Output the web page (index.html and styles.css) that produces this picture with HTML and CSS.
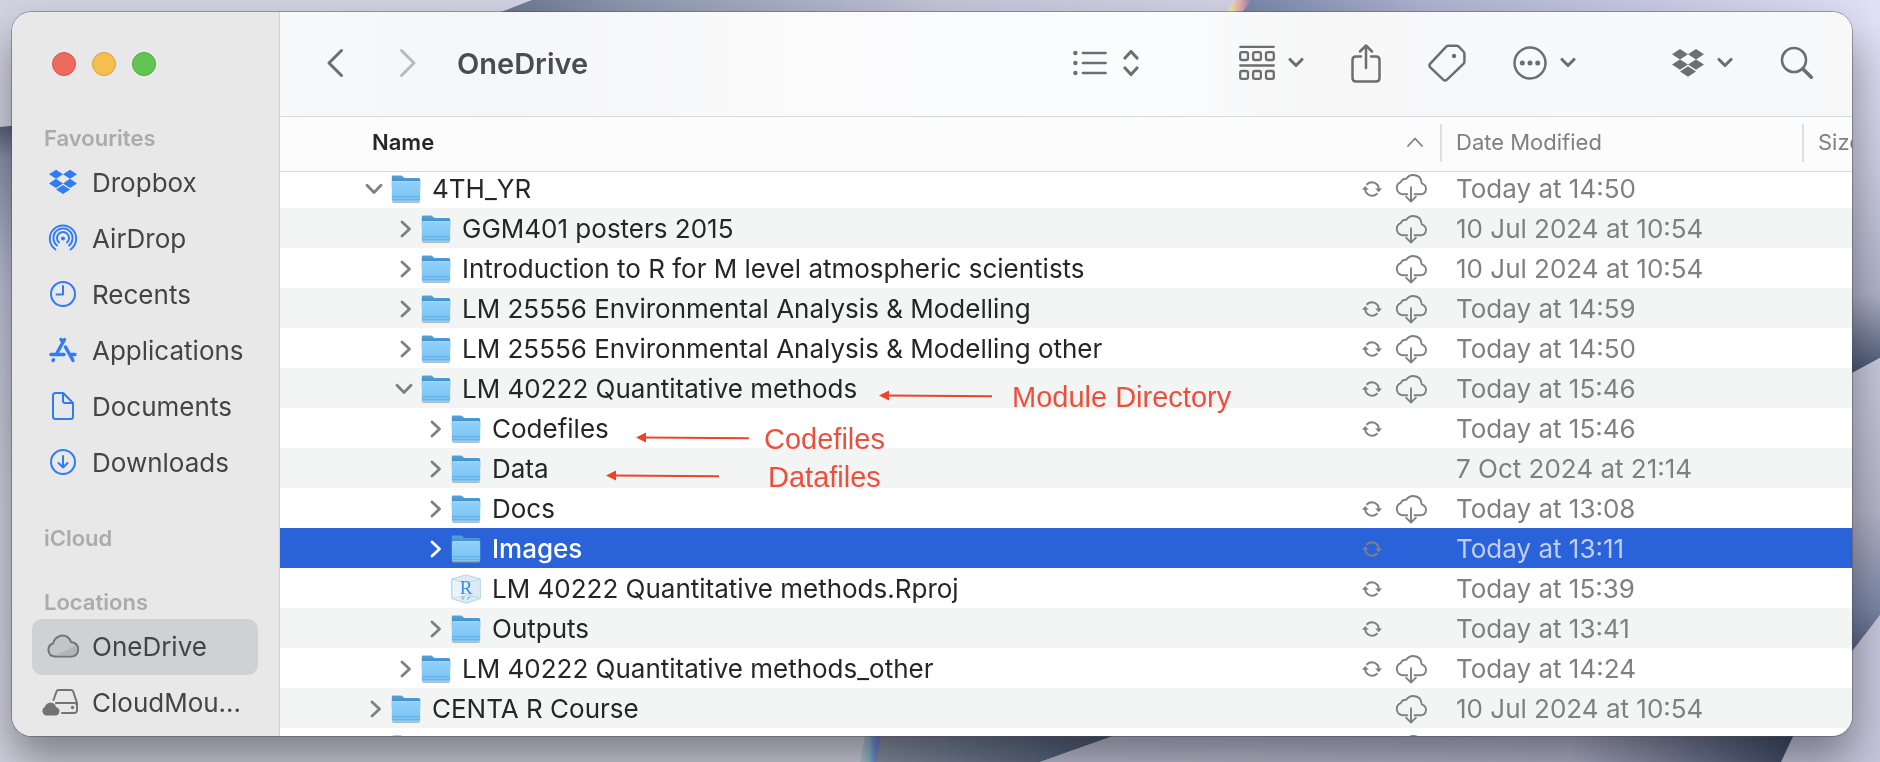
FILE: index.html
```html
<!DOCTYPE html>
<html lang="en-GB">
<head>
<meta charset="utf-8">
<title>OneDrive</title>
<link rel="stylesheet" href="styles.css">
</head>
<body>
<svg class="defs" aria-hidden="true">
  <defs>
    <linearGradient id="folder-front" x1="0" y1="0" x2="0" y2="1"><stop offset="0" stop-color="#8fd0fa"/><stop offset="1" stop-color="#7cc3f3"/></linearGradient>
    <linearGradient id="folder-back" x1="0" y1="0" x2="0" y2="1"><stop offset="0" stop-color="#56a3da"/><stop offset="1" stop-color="#2f7cc4"/></linearGradient>
  </defs>
  <symbol id="folder" viewBox="0 0 30 28">
    <path d="M1.5 27.4h27" stroke="#8a9096" stroke-width="1.2" opacity=".6"/>
    <path d="M.8 2Q.8.6 2.2.6h7.6q.9 0 1.600.7l1 1q.7.6 1.700.6h13.500q1.600 0 1.600 1.500V12H.8z" fill="url(#folder-back)"/>
    <path d="M.8 7.600Q.8 6.300 2 6.300h26q1.200 0 1.200 1.300v17.600q0 1.600-1.600 1.600H2.400q-1.600 0-1.600-1.600z" fill="url(#folder-front)"/>
    <path d="M1.600 6.700h26.800" stroke="#b3e0fc" stroke-width=".8"/>
    <path d="M1 21.600h28M1 24.200h28" stroke="#62aee3" stroke-width="1"/>
  </symbol>
  <symbol id="right" viewBox="0 0 12 18"><path d="M2 2l7.500 7L2 16" fill="none" stroke="currentColor" stroke-width="2.800" stroke-linecap="round" stroke-linejoin="round"/></symbol>
  <symbol id="down" viewBox="0 0 18 12"><path d="M2 2.300l7 7.200 7-7.200" fill="none" stroke="currentColor" stroke-width="2.800" stroke-linecap="round" stroke-linejoin="round"/></symbol>
  <symbol id="menu-down" viewBox="0 0 16 12"><path d="M2 2.500l6 6 6-6" fill="none" stroke="currentColor" stroke-width="3.100" stroke-linecap="round" stroke-linejoin="round"/></symbol>
  <symbol id="sync" viewBox="0 0 20 16">
    <g fill="none" stroke="currentColor" stroke-width="1.900" stroke-linecap="round"><path d="M5 3.200A7 7 0 0 1 16.800 8.500M15 12.800A7 7 0 0 1 3.200 7.500"/></g>
    <path d="M13.200 7.500h6.800l-3.300 3.800zM0 8.700h6.600L3.300 4.900z" fill="currentColor"/>
  </symbol>
  <symbol id="cloud-down" viewBox="0 0 32 29">
    <path d="M12.300 20.300H7.500A6.300 6.300 0 0 1 5.800 8.200Q7 4.600 11.300 4.800Q14 .9 18.500 1Q26.400 1.500 26.700 9.300Q31 10.600 31 15Q30.700 20.100 25.600 20.300H19.600M16 13.200v14.300M11.300 22.800L16 27.600l4.700-4.800" fill="none" stroke="currentColor" stroke-width="1.900" stroke-linecap="round" stroke-linejoin="round"/>
  </symbol>
  <symbol id="dropbox" viewBox="0 0 32 28">
    <path d="M8 0l8 5.200-8 5.200-8-5.200zM24 0l8 5.200-8 5.200-8-5.200zM8 10.400l8 5.200-8 5.200-8-5.200zM24 10.400l8 5.200-8 5.200-8-5.200zM16 17.300l8 5.200-8 5.200-8-5.200z" fill="currentColor"/>
  </symbol>
</svg>

<svg class="wallpaper" viewBox="0 0 1880 762" preserveAspectRatio="none" aria-hidden="true">
  <defs>
    <linearGradient id="w-left" x1="0" y1="0" x2="0" y2="1"><stop offset="0" stop-color="#4f5971"/><stop offset=".06" stop-color="#8d94ad"/><stop offset=".25" stop-color="#bcc1d5"/><stop offset=".6" stop-color="#cdd2dd"/><stop offset="1" stop-color="#d2d3e1"/></linearGradient>
    <linearGradient id="w-top" x1="0" y1="0" x2="1" y2="0"><stop offset="0" stop-color="#66718b"/><stop offset=".2" stop-color="#8f98ae"/><stop offset=".6" stop-color="#c3c4d8"/><stop offset="1" stop-color="#d3d3e6"/></linearGradient>
    <linearGradient id="w-top2" x1="0" y1="0" x2="1" y2="0"><stop offset="0" stop-color="#7482a5"/><stop offset=".3" stop-color="#adb3cf"/><stop offset="1" stop-color="#e0e0f6"/></linearGradient>
    <linearGradient id="w-right" x1="0" y1="0" x2="0" y2="1"><stop offset="0" stop-color="#e0e0f6"/><stop offset=".4" stop-color="#cdcde2"/><stop offset=".75" stop-color="#aeb3c8"/><stop offset="1" stop-color="#384563"/></linearGradient>
    <linearGradient id="w-right2" x1="0" y1="0" x2="0" y2="1"><stop offset="0" stop-color="#c9c9dc"/><stop offset=".45" stop-color="#b4b5c8"/><stop offset=".75" stop-color="#7a86a5"/><stop offset="1" stop-color="#313d5e"/></linearGradient>
    <linearGradient id="w-bottom" x1="0" y1="0" x2="1" y2="0"><stop offset="0" stop-color="#8c95a8"/><stop offset="1" stop-color="#47546f"/></linearGradient>
    <linearGradient id="w-bottom2" x1="0" y1="0" x2="1" y2="0"><stop offset="0" stop-color="#bfc0d4"/><stop offset=".7" stop-color="#b3b6cc"/><stop offset="1" stop-color="#3f4b6a"/></linearGradient>
    <linearGradient id="rainbow" x1="0" y1="0" x2="1" y2="0"><stop offset="0" stop-color="#cdcde2"/><stop offset=".35" stop-color="#ece4a0"/><stop offset=".7" stop-color="#d99fb4"/><stop offset="1" stop-color="#7482a5"/></linearGradient>
    <linearGradient id="rainbow2" x1="0" y1="0" x2="1" y2="0"><stop offset="0" stop-color="#c5c8da"/><stop offset=".4" stop-color="#8fc0cf"/><stop offset=".7" stop-color="#7189dd"/><stop offset="1" stop-color="#7a78a8"/></linearGradient>
  </defs>
  <path d="M0 0h1880v762H0z" fill="#d2d3e1"/>
  <path d="M0 127l60-6v641H0z" fill="url(#w-left)"/>
  <path d="M532 0h720l-20 20H480z" fill="url(#w-top)"/>
  <path d="M1248 0h632v20h-652z" fill="url(#w-top2)"/>
  <path d="M1236 0h16l-16 20h-16z" fill="url(#rainbow)"/>
  <path d="M1830 20h50v338l-50 27z" fill="url(#w-right)"/>
  <path d="M1830 385l50-27v257l-50 77z" fill="url(#w-right2)"/>
  <path d="M1880 615v147h-99l20-45z" fill="#c6c6dc"/>
  <path d="M875 730h255l-90 32H865z" fill="url(#w-bottom)"/>
  <path d="M866 730h16l-6 32h-16z" fill="url(#rainbow2)"/>
  <path d="M1130 730h666l-15 32h-741z" fill="url(#w-bottom2)"/>
</svg>

<div class="window">
  <nav class="sidebar" aria-label="Sidebar">
    <div class="lights">
      <button class="light close" aria-label="Close"></button>
      <button class="light minimise" aria-label="Minimise"></button>
      <button class="light zoom" aria-label="Zoom"></button>
    </div>

    <h2 class="group-title">Favourites</h2>
    <ul class="places">
      <li><a class="place" href="#"><svg class="place-icon blue" viewBox="0 0 32 32"><use href="#dropbox" x="2" y="2" width="28" height="28"/></svg><span>Dropbox</span></a></li>
      <li><a class="place" href="#"><svg class="place-icon blue" viewBox="0 0 32 32"><g fill="none" stroke="currentColor" stroke-width="1.900" stroke-linecap="round"><path d="M8.500 27.500a13.200 13.200 0 1 1 15 0M10 23.500a9.600 9.600 0 1 1 12 0M12 20.500a6 6 0 1 1 8 0"/></g><circle cx="16" cy="16.500" r="2" fill="currentColor"/></svg><span>AirDrop</span></a></li>
      <li><a class="place" href="#"><svg class="place-icon blue" viewBox="0 0 32 32"><g fill="none" stroke="currentColor" stroke-width="2" stroke-linecap="round" stroke-linejoin="round"><circle cx="16" cy="16" r="12"/><path d="M16 8v8.500H9.500"/></g></svg><span>Recents</span></a></li>
      <li><a class="place" href="#"><svg class="place-icon blue" viewBox="0 0 32 32"><g fill="none" stroke="currentColor" stroke-width="3.400" stroke-linecap="round"><path d="M17.500 5.500L10 19M14 5.500l1.800 3M18.500 13l7.500 13.500M4 20.500h13M24.500 20.500H28M6 26.500l.5-.8"/></g></svg><span>Applications</span></a></li>
      <li><a class="place" href="#"><svg class="place-icon blue" viewBox="0 0 32 32"><path d="M8.500 3h7.700L26 13v13.500q0 2.500-2.500 2.500h-15Q6 29 6 26.500v-21Q6 3 8.500 3zM16 3.500V11q0 2 2 2h7.500" fill="none" stroke="currentColor" stroke-width="2" stroke-linejoin="round"/></svg><span>Documents</span></a></li>
      <li><a class="place" href="#"><svg class="place-icon blue" viewBox="0 0 32 32"><g fill="none" stroke="currentColor" stroke-width="2" stroke-linecap="round" stroke-linejoin="round"><circle cx="16" cy="16" r="12"/><path d="M16 10v11.500M11.500 17l4.500 4.500 4.500-4.500"/></g></svg><span>Downloads</span></a></li>
    </ul>

    <h2 class="group-title">iCloud</h2>

    <h2 class="group-title">Locations</h2>
    <ul class="places">
      <li><a class="place current" href="#" aria-current="page"><svg class="place-icon" viewBox="0 0 32 32"><path d="M7.500 26.500A6.700 6.700 0 0 1 6 13.500Q8 6.500 15 5.500Q21.500 5.300 24 12Q31 12.800 31.200 19.500Q30.500 26 24.500 26.500z" fill="#c4c5c6" stroke="currentColor" stroke-width="2" stroke-linejoin="round"/><path d="M9 25.500l20-10q3 6-3 10z" fill="#b2b3b5"/></svg><span>OneDrive</span></a></li>
      <li><a class="place" href="#"><svg class="place-icon drive" viewBox="0 0 38 32"><path d="M12.500 14l3-8.500Q16 4 17.800 4h12q1.800 0 2.400 1.500L36 17v7.500q-.3 2.500-2.800 2.500H21M15 17h18.500q2.500.3 2.500 2.800" fill="none" stroke="currentColor" stroke-width="2" stroke-linecap="round"/><circle cx="31.500" cy="21.500" r="1.700" fill="currentColor"/><path d="M4.500 29.500a4.600 4.600 0 0 1-.8-8.400Q5 17 9.500 16.500q4.500.3 5.500 4.400q3.600 1 3.500 4.600-.5 3.700-4 4z" fill="currentColor"/></svg><span>CloudMou...</span></a></li>
    </ul>
  </nav>

  <main class="content">
    <header class="toolbar">
      <div class="history">
        <button class="tool" aria-label="Back"><svg width="18" height="30" viewBox="0 0 18 30"><path d="M15.500 2.500L3 15l12.500 12.500" fill="none" stroke="currentColor" stroke-width="3" stroke-linecap="round" stroke-linejoin="round"/></svg></button>
        <button class="tool" aria-label="Forward" disabled><svg width="18" height="30" viewBox="0 0 18 30"><path d="M2.500 2.500L15 15 2.500 27.500" fill="none" stroke="currentColor" stroke-width="3" stroke-linecap="round" stroke-linejoin="round"/></svg></button>
      </div>
      <h1 class="title">OneDrive</h1>
      <div class="tools">
        <button class="tool list-view" aria-label="View as list">
          <svg width="34" height="26" viewBox="0 0 34 26"><g fill="currentColor"><circle cx="2.400" cy="3" r="2.200"/><circle cx="2.400" cy="13" r="2.200"/><circle cx="2.400" cy="23" r="2.200"/></g><path d="M10 3h22.500M10 13h22.500M10 23h22.500" stroke="currentColor" stroke-width="2.600" stroke-linecap="round"/></svg>
          <svg width="16" height="28" viewBox="0 0 16 28"><path d="M2 9l6-6.500L14 9M2 19l6 6.500 6-6.500" fill="none" stroke="currentColor" stroke-width="3.100" stroke-linecap="round" stroke-linejoin="round"/></svg>
        </button>
        <button class="tool apart" aria-label="Group items">
          <svg width="36" height="36" viewBox="0 0 36 36"><g fill="none" stroke="currentColor" stroke-width="2.300"><path d="M1.200 1.800h33.600M1.200 20.500h33.600" stroke-linecap="round"/><rect x="1.200" y="7.200" width="7.800" height="7.800" rx="1.800"/><rect x="14.100" y="7.200" width="7.800" height="7.800" rx="1.800"/><rect x="27" y="7.200" width="7.800" height="7.800" rx="1.800"/><rect x="1.200" y="26" width="7.800" height="7.800" rx="1.800"/><rect x="14.100" y="26" width="7.800" height="7.800" rx="1.800"/><rect x="27" y="26" width="7.800" height="7.800" rx="1.800"/></g></svg>
          <svg width="16" height="12"><use href="#menu-down"/></svg>
        </button>
        <button class="tool" aria-label="Share"><svg class="share" width="30" height="40" viewBox="0 0 30 40"><path d="M10 13.500H5q-3.500 0-3.500 3.500v18q0 3.500 3.500 3.500h20q3.500 0 3.500-3.500V17q0-3.500-3.500-3.500h-5M15 25V3M9 8.500L15 2.500l6 6" fill="none" stroke="currentColor" stroke-width="2.500" stroke-linecap="round" stroke-linejoin="round"/></svg></button>
        <button class="tool" aria-label="Edit tags"><svg width="38" height="38" viewBox="0 0 38 38"><path d="M20.500 1.700h8q1.300 0 2.300 1l4.600 4.800q1 1 1 2.300v7.700q0 1.300-1 2.300L19 35.600q-1.900 1.700-3.800 0L2.300 23.500q-1.700-1.900 0-3.800L18.200 2.700q1-1 2.300-1z" fill="none" stroke="currentColor" stroke-width="2.500"/><circle cx="26" cy="12" r="2.200" fill="currentColor"/></svg></button>
        <button class="tool" aria-label="Actions">
          <svg width="34" height="34" viewBox="0 0 34 34"><circle cx="17" cy="17" r="15.500" fill="none" stroke="currentColor" stroke-width="2.500"/><g fill="currentColor"><circle cx="9.300" cy="17" r="2.500"/><circle cx="17" cy="17" r="2.500"/><circle cx="24.700" cy="17" r="2.500"/></g></svg>
          <svg width="16" height="12"><use href="#menu-down"/></svg>
        </button>
        <button class="tool apart" aria-label="Dropbox">
          <svg width="32" height="28"><use href="#dropbox"/></svg>
          <svg width="16" height="12"><use href="#menu-down"/></svg>
        </button>
        <button class="tool" aria-label="Search"><svg width="34" height="34" viewBox="0 0 34 34"><circle cx="14" cy="14" r="12" fill="none" stroke="currentColor" stroke-width="2.600"/><path d="M23 23l8.300 8.300" stroke="currentColor" stroke-width="3.600" stroke-linecap="round"/></svg></button>
      </div>
    </header>

    <div class="list">
      <table class="files">
        <colgroup><col><col class="col-date"><col class="col-size"></colgroup>
        <thead>
          <tr>
            <th class="head-name" aria-sort="ascending"><div class="head-row"><span>Name</span><svg width="16" height="10" viewBox="0 0 16 10"><path d="M1 9l7-7.500L15 9" fill="none" stroke="currentColor" stroke-width="1.800" stroke-linecap="round" stroke-linejoin="round"/></svg></div></th>
            <th class="head-other">Date Modified</th>
            <th class="head-other">Size</th>
          </tr>
        </thead>
        <tbody>
          <tr>
            <td><div class="name level-0"><button class="toggle" aria-label="Collapse"><svg width="18" height="12"><use href="#down"/></svg></button><svg class="kind"><use href="#folder"/></svg><span class="label">4TH_YR</span><svg class="sync"><use href="#sync"/></svg><svg class="cloud"><use href="#cloud-down"/></svg></div></td>
            <td class="date">Today at 14:50</td><td></td>
          </tr>
          <tr>
            <td><div class="name level-1"><button class="toggle" aria-label="Expand"><svg width="12" height="18"><use href="#right"/></svg></button><svg class="kind"><use href="#folder"/></svg><span class="label">GGM401 posters 2015</span><svg class="cloud"><use href="#cloud-down"/></svg></div></td>
            <td class="date">10 Jul 2024 at 10:54</td><td></td>
          </tr>
          <tr>
            <td><div class="name level-1"><button class="toggle" aria-label="Expand"><svg width="12" height="18"><use href="#right"/></svg></button><svg class="kind"><use href="#folder"/></svg><span class="label">Introduction to R for M level atmospheric scientists</span><svg class="cloud"><use href="#cloud-down"/></svg></div></td>
            <td class="date">10 Jul 2024 at 10:54</td><td></td>
          </tr>
          <tr>
            <td><div class="name level-1"><button class="toggle" aria-label="Expand"><svg width="12" height="18"><use href="#right"/></svg></button><svg class="kind"><use href="#folder"/></svg><span class="label">LM 25556 Environmental Analysis &amp; Modelling</span><svg class="sync"><use href="#sync"/></svg><svg class="cloud"><use href="#cloud-down"/></svg></div></td>
            <td class="date">Today at 14:59</td><td></td>
          </tr>
          <tr>
            <td><div class="name level-1"><button class="toggle" aria-label="Expand"><svg width="12" height="18"><use href="#right"/></svg></button><svg class="kind"><use href="#folder"/></svg><span class="label">LM 25556 Environmental Analysis &amp; Modelling other</span><svg class="sync"><use href="#sync"/></svg><svg class="cloud"><use href="#cloud-down"/></svg></div></td>
            <td class="date">Today at 14:50</td><td></td>
          </tr>
          <tr>
            <td><div class="name level-1"><button class="toggle" aria-label="Collapse"><svg width="18" height="12"><use href="#down"/></svg></button><svg class="kind"><use href="#folder"/></svg><span class="label">LM 40222 Quantitative methods</span><svg class="sync"><use href="#sync"/></svg><svg class="cloud"><use href="#cloud-down"/></svg></div></td>
            <td class="date">Today at 15:46</td><td></td>
          </tr>
          <tr>
            <td><div class="name level-2"><button class="toggle" aria-label="Expand"><svg width="12" height="18"><use href="#right"/></svg></button><svg class="kind"><use href="#folder"/></svg><span class="label">Codefiles</span><svg class="sync"><use href="#sync"/></svg><span class="cloud"></span></div></td>
            <td class="date">Today at 15:46</td><td></td>
          </tr>
          <tr>
            <td><div class="name level-2"><button class="toggle" aria-label="Expand"><svg width="12" height="18"><use href="#right"/></svg></button><svg class="kind"><use href="#folder"/></svg><span class="label">Data</span></div></td>
            <td class="date">7 Oct 2024 at 21:14</td><td></td>
          </tr>
          <tr>
            <td><div class="name level-2"><button class="toggle" aria-label="Expand"><svg width="12" height="18"><use href="#right"/></svg></button><svg class="kind"><use href="#folder"/></svg><span class="label">Docs</span><svg class="sync"><use href="#sync"/></svg><svg class="cloud"><use href="#cloud-down"/></svg></div></td>
            <td class="date">Today at 13:08</td><td></td>
          </tr>
          <tr class="selected">
            <td><div class="name level-2"><button class="toggle" aria-label="Expand"><svg width="12" height="18"><use href="#right"/></svg></button><svg class="kind"><use href="#folder"/></svg><span class="label">Images</span><svg class="sync"><use href="#sync"/></svg><span class="cloud"></span></div></td>
            <td class="date">Today at 13:11</td><td></td>
          </tr>
          <tr>
            <td><div class="name level-2"><span class="toggle"></span><svg class="kind project" viewBox="0 0 30 30"><path d="M15 .8L29.300 5v19.500L15 29.300.7 24.500V5z" fill="#dcebf5" stroke="#b4d4e6" stroke-width="1"/><path d="M.7 5L15 9l14.300-4M.7 24.500L15 20l14.300 4.500" fill="none" stroke="#b9d8e8" stroke-width="1"/><path d="M2 6l13 3.500v11L2 24z" fill="#eaf4fa"/><text x="15" y="20" text-anchor="middle" class="project-letter">R</text><path d="M10 23h4M12 23v3M20 23q-4 0-3 3" fill="none" stroke="#7fb8e4" stroke-width="1.200"/></svg><span class="label">LM 40222 Quantitative methods.Rproj</span><svg class="sync"><use href="#sync"/></svg><span class="cloud"></span></div></td>
            <td class="date">Today at 15:39</td><td></td>
          </tr>
          <tr>
            <td><div class="name level-2"><button class="toggle" aria-label="Expand"><svg width="12" height="18"><use href="#right"/></svg></button><svg class="kind"><use href="#folder"/></svg><span class="label">Outputs</span><svg class="sync"><use href="#sync"/></svg><span class="cloud"></span></div></td>
            <td class="date">Today at 13:41</td><td></td>
          </tr>
          <tr>
            <td><div class="name level-1"><button class="toggle" aria-label="Expand"><svg width="12" height="18"><use href="#right"/></svg></button><svg class="kind"><use href="#folder"/></svg><span class="label">LM 40222 Quantitative methods_other</span><svg class="sync"><use href="#sync"/></svg><svg class="cloud"><use href="#cloud-down"/></svg></div></td>
            <td class="date">Today at 14:24</td><td></td>
          </tr>
          <tr>
            <td><div class="name level-0"><button class="toggle" aria-label="Expand"><svg width="12" height="18"><use href="#right"/></svg></button><svg class="kind"><use href="#folder"/></svg><span class="label">CENTA R Course</span><svg class="cloud"><use href="#cloud-down"/></svg></div></td>
            <td class="date">10 Jul 2024 at 10:54</td><td></td>
          </tr>
          <tr>
            <td><div class="name level-0"><span class="toggle"></span><svg class="kind"><use href="#folder"/></svg><span class="label"></span><svg class="cloud"><use href="#cloud-down"/></svg></div></td>
            <td class="date"></td><td></td>
          </tr>
        </tbody>
      </table>

      <div class="note note-module"><svg class="arrow" viewBox="0 0 114 12"><path d="M8 5.500l105 .8" stroke="#ec4427" stroke-width="2"/><path d="M0 5.500L10 .5v10z" fill="#ec4427"/></svg><span>Module Directory</span></div>
      <div class="note note-code"><svg class="arrow" viewBox="0 0 114 12"><path d="M8 5.500l105 .8" stroke="#ec4427" stroke-width="2"/><path d="M0 5.500L10 .5v10z" fill="#ec4427"/></svg><span>Codefiles</span></div>
      <div class="note note-data"><svg class="arrow" viewBox="0 0 114 12"><path d="M8 5.500l105 .8" stroke="#ec4427" stroke-width="2"/><path d="M0 5.500L10 .5v10z" fill="#ec4427"/></svg><span>Datafiles</span></div>
    </div>
  </main>
</div>
</body>
</html>
```
FILE: styles.css
```css
* {
  box-sizing: border-box;
}

body {
  margin: 0;
  height: 100vh;
  padding: 12px 28px 26px 12px;
  overflow: hidden;
  background: #d2d3e1;
  font-family: Inter, "Liberation Sans", sans-serif;
  font-size: 26px;
  color: #262626;
}

button {
  margin: 0;
  padding: 0;
  border: 0;
  background: none;
  color: inherit;
  font: inherit;
}

svg {
  display: block;
  flex: none;
}

.defs {
  position: absolute;
  width: 0;
  height: 0;
}

.wallpaper {
  position: fixed;
  inset: 0;
  width: 100%;
  height: 100%;
}

.window {
  position: relative;
  display: flex;
  height: 100%;
  border-radius: 20px;
  overflow: hidden;
  background: #fff;
  box-shadow: 0 0 0 1px rgba(70, 72, 90, 0.45), 0 24px 44px rgba(0, 0, 0, 0.4);
}

/* Sidebar */

.sidebar {
  flex: none;
  width: 268px;
  padding: 40px 21px 0 20px;
  background: #e8e8e8;
  border-right: 1px solid #d2d2d2;
  overflow: hidden;
}

.lights {
  display: flex;
  gap: 16px;
  margin-bottom: 45px;
  padding-left: 20px;
}

.light {
  width: 24px;
  height: 24px;
  border-radius: 50%;
}

.close {
  background: #ed6a5e;
  border: 1px solid #d5564b;
}

.minimise {
  background: #f5bf4f;
  border: 1px solid #d9a33c;
}

.zoom {
  background: #61c554;
  border: 1px solid #4fa943;
}

.group-title {
  margin: 0 0 0 12px;
  font-size: 22px;
  line-height: 34px;
  font-weight: 600;
  color: #ababab;
}

.places {
  margin: 0;
  padding: 0;
  list-style: none;
}

.places + .group-title,
.group-title + .group-title {
  margin-top: 30px;
}

.place {
  display: flex;
  align-items: center;
  gap: 13px;
  height: 56px;
  padding: 0 0 2px 15px;
  border-radius: 10px;
  color: #444;
  text-decoration: none;
  white-space: nowrap;
}

.current {
  background: #d0d1d3;
}

.place-icon {
  width: 32px;
  height: 32px;
  color: #737373;
}

.drive {
  width: 38px;
  margin-left: -6px;
}

.blue {
  color: #2f7bf8;
}

/* Toolbar */

.content {
  display: flex;
  flex: 1;
  flex-direction: column;
  min-width: 0;
}

.toolbar {
  display: flex;
  flex: none;
  align-items: center;
  height: 105px;
  padding: 0 38px 0 46px;
  border-bottom: 1px solid #d6d7d8;
  background: linear-gradient(90deg, #f8f9fb, #f5f6f8 14%, #fafafb 30%, #fbfcfe 55%, #f7f7f7 66%, #f7f9fc 82%, #f8f8f9);
}

.history {
  display: flex;
  gap: 55px;
  padding-bottom: 2px;
}

.title {
  margin: 0 auto 0 40px;
  font-size: 29px;
  line-height: 36px;
  font-weight: 600;
  color: #4c4c4c;
}

.tools {
  display: flex;
  align-items: center;
  gap: 47px;
  padding-bottom: 2px;
}

.tool {
  display: flex;
  align-items: center;
  gap: 13px;
  color: #6e6e6e;
}

.tool:disabled {
  color: #b9babc;
}

.apart {
  margin-left: 49px;
}

.list-view {
  gap: 16px;
  margin-right: 4px;
}

/* File list */

.list {
  position: relative;
  flex: 1;
  min-height: 0;
  overflow: hidden;
}

.files {
  width: 100%;
  table-layout: fixed;
  border-collapse: collapse;
}

.col-date {
  width: 362px;
}

.col-size {
  width: 50px;
}

.files th {
  height: 54px;
  padding: 0;
  border-bottom: 1px solid #d6d7d8;
  background: #fcfcfc;
  font-size: 22px;
  line-height: 28px;
  text-align: left;
  white-space: nowrap;
  overflow: hidden;
}

.head-row {
  display: flex;
  align-items: center;
  justify-content: space-between;
  padding: 0 17px 3px 92px;
}

.head-row svg {
  color: #7f7f7f;
}

.files .head-name {
  font-weight: 600;
}

.files .head-other {
  padding: 0 0 3px 16px;
  background: linear-gradient(#dedede, #dedede) 0 7px / 2px 38px no-repeat #fcfcfc;
  color: #808080;
  font-weight: 400;
}

.files td {
  height: 40px;
  padding: 2px 0 0;
  line-height: 32px;
  white-space: nowrap;
}

.files tbody tr:first-child td {
  height: 37px;
  padding-top: 0;
  padding-bottom: 2px;
}

.files tbody tr:nth-child(even) {
  background: #f3f5f4;
}

.files tbody .selected,
.files tbody tr.selected:nth-child(even) {
  background: #2a62d9;
}

.name {
  display: flex;
  align-items: center;
  padding-right: 13px;
}

.level-0 {
  padding-left: 81px;
}

.level-1 {
  padding-left: 111px;
}

.level-2 {
  padding-left: 141px;
}

.toggle {
  display: flex;
  flex: none;
  width: 30px;
  padding-left: 4px;
  color: #808080;
}

.toggle svg[width="12"] {
  margin-left: 5px;
}

.kind {
  width: 30px;
  height: 28px;
  margin-right: 11px;
}

.project {
  height: 30px;
}

.project-letter {
  font: 19px "Liberation Serif", serif;
  fill: #3f8ddd;
}

.label {
  margin-right: auto;
}

.sync {
  width: 20px;
  height: 16px;
  margin-right: 13px;
  color: #808080;
}

.cloud {
  flex: none;
  width: 32px;
  height: 29px;
  color: #808080;
}

.files .date {
  padding-left: 16px;
  color: #808080;
}

.selected .label {
  color: #fff;
  font-weight: 500;
}

.selected .toggle {
  color: #fff;
}

.files .selected .date {
  color: #c0cff3;
}

/* Hand-placed annotations over the list */

.note {
  position: absolute;
  display: flex;
  align-items: flex-start;
  font-family: "Liberation Sans", Arial, sans-serif;
  font-size: 29px;
  line-height: 32px;
  color: #ee4f3d;
  white-space: nowrap;
}

.arrow {
  width: 114px;
  height: 12px;
  margin-top: 9px;
}

.note-module {
  left: 599px;
  top: 264px;
  gap: 19px;
}

.note-code {
  left: 356px;
  top: 306px;
  gap: 14px;
}

.note-data {
  left: 326px;
  top: 344px;
  gap: 48px;
}
```
